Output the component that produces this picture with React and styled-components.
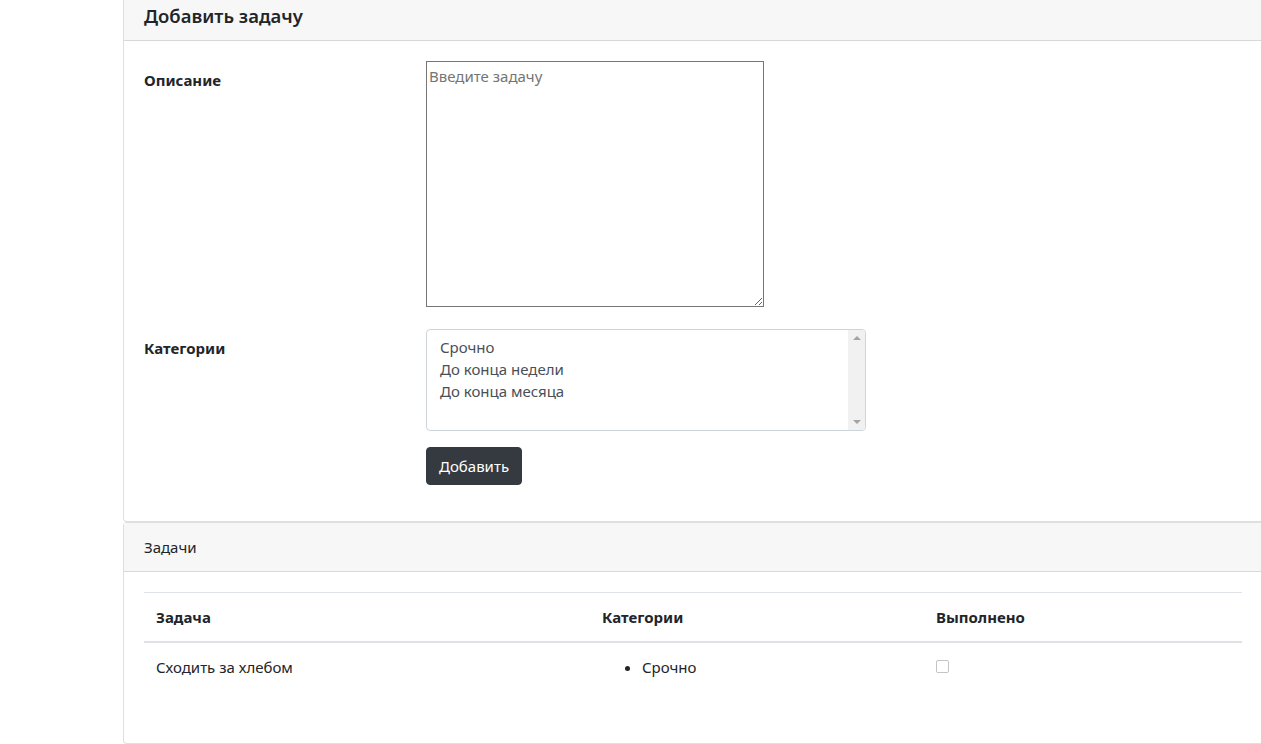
import React from 'react';
import styled, { createGlobalStyle } from 'styled-components';

const GlobalStyle = createGlobalStyle`
  html, body {
    margin: 0;
    padding: 0;
    background: #fff;
    overflow: hidden;
  }
  body {
    font-family: "Noto Sans", "Open Sans", sans-serif;
    font-size: 16px;
    line-height: 1.5;
    color: #212529;
  }
  * { box-sizing: border-box; }
`;

const Page = styled.div`
  margin-top: -9px;
  padding-left: 123px;
  width: 1263px;
`;

const Card = styled.div`
  border: 1px solid rgba(0, 0, 0, 0.125);
  border-radius: 4px;
  background: #fff;
`;

const CardHeader = styled.div`
  padding: 12px 20px;
  background: #f7f7f7;
  border-bottom: 1px solid rgba(0, 0, 0, 0.125);
  font-size: ${p => (p.big ? '18.5px' : '15px')};
  font-weight: ${p => (p.big ? 600 : 400)};
  line-height: 24px;
`;

const CardBody = styled.div`
  padding: 20px;
`;

const FormRow = styled.div`
  display: grid;
  grid-template-columns: 282px 1fr;
  margin-bottom: ${p => p.mb || 16}px;
`;

const Label = styled.label`
  padding-top: 7px;
  font-weight: 700;
  font-size: 15px;
  line-height: 24px;
`;

const TextArea = styled.textarea`
  display: block;
  width: 338px;
  height: 246px;
  margin: 0;
  padding: 2px;
  border: 1px solid #767676;
  border-radius: 0;
  font-family: "Noto Sans", "Open Sans", sans-serif;
  font-size: 15px;
  line-height: 24px;
  color: #212529;
  resize: both;
  &::placeholder { color: #757575; }
`;

const ListBox = styled.div`
  width: 440px;
  height: 102px;
  border: 1px solid #ced4da;
  border-radius: 4px;
  display: flex;
  overflow: hidden;
`;

const Options = styled.div`
  flex: 1;
  padding: 6px 13px;
  color: #495057;
  font-size: 15px;
  line-height: 22px;
`;

const ScrollTrack = styled.div`
  width: 17px;
  background: #f1f1f1;
  display: flex;
  flex-direction: column;
  justify-content: space-between;
  align-items: center;
  padding: 6px 0;
`;

const Arrow = styled.div`
  width: 0;
  height: 0;
  border-left: 4px solid transparent;
  border-right: 4px solid transparent;
  ${p => (p.down ? 'border-top: 4px solid #a3a3a3;' : 'border-bottom: 4px solid #a3a3a3;')}
`;

const Actions = styled.div`
  margin-left: 282px;
  margin-bottom: 16px;
`;

const Button = styled.button`
  display: block;
  height: 38px;
  padding: 6px 12px;
  border: 1px solid #343a40;
  border-radius: 4px;
  background: #343a40;
  color: #fff;
  font-family: "Noto Sans", "Open Sans", sans-serif;
  font-size: 15px;
  line-height: 24px;
`;

const Table = styled.table`
  width: 100%;
  border-collapse: collapse;
  margin-bottom: 16px;
  font-size: 15px;
`;

const Th = styled.th`
  text-align: left;
  padding: 12px;
  font-weight: 700;
  line-height: 24px;
  border-top: 1px solid #dee2e6;
  border-bottom: 2px solid #dee2e6;
  width: ${p => p.w}px;
`;

const Td = styled.td`
  padding: 12px;
  vertical-align: top;
  line-height: 24px;
`;

const CatList = styled.ul`
  margin: 0 0 16px;
  padding-left: 40px;
`;

const Check = styled.input`
  appearance: none;
  display: block;
  margin: 5px 0 0 0;
  width: 13px;
  height: 13px;
  border: 1px solid #c4c4c4;
  border-radius: 2px;
  background: #fff;
`;

const categories = ['Срочно', 'До конца недели', 'До конца месяца'];

export default function App() {
  return (
    <>
      <GlobalStyle />
      <Page>
        <Card>
          <CardHeader big>Добавить задачу</CardHeader>
          <CardBody>
            <FormRow mb={22}>
              <Label>Описание</Label>
              <div>
                <TextArea placeholder="Введите задачу" />
              </div>
            </FormRow>
            <FormRow>
              <Label>Категории</Label>
              <ListBox>
                <Options>
                  {categories.map(c => (
                    <div key={c}>{c}</div>
                  ))}
                </Options>
                <ScrollTrack>
                  <Arrow />
                  <Arrow down />
                </ScrollTrack>
              </ListBox>
            </FormRow>
            <Actions>
              <Button>Добавить</Button>
            </Actions>
          </CardBody>
        </Card>
        <Card>
          <CardHeader>Задачи</CardHeader>
          <CardBody>
            <Table>
              <thead>
                <tr>
                  <Th w={446}>Задача</Th>
                  <Th w={334}>Категории</Th>
                  <Th w={318}>Выполнено</Th>
                </tr>
              </thead>
              <tbody>
                <tr>
                  <Td>Сходить за хлебом</Td>
                  <Td>
                    <CatList>
                      <li>Срочно</li>
                    </CatList>
                  </Td>
                  <Td>
                    <Check type="checkbox" />
                  </Td>
                </tr>
              </tbody>
            </Table>
          </CardBody>
        </Card>
      </Page>
    </>
  );
}
